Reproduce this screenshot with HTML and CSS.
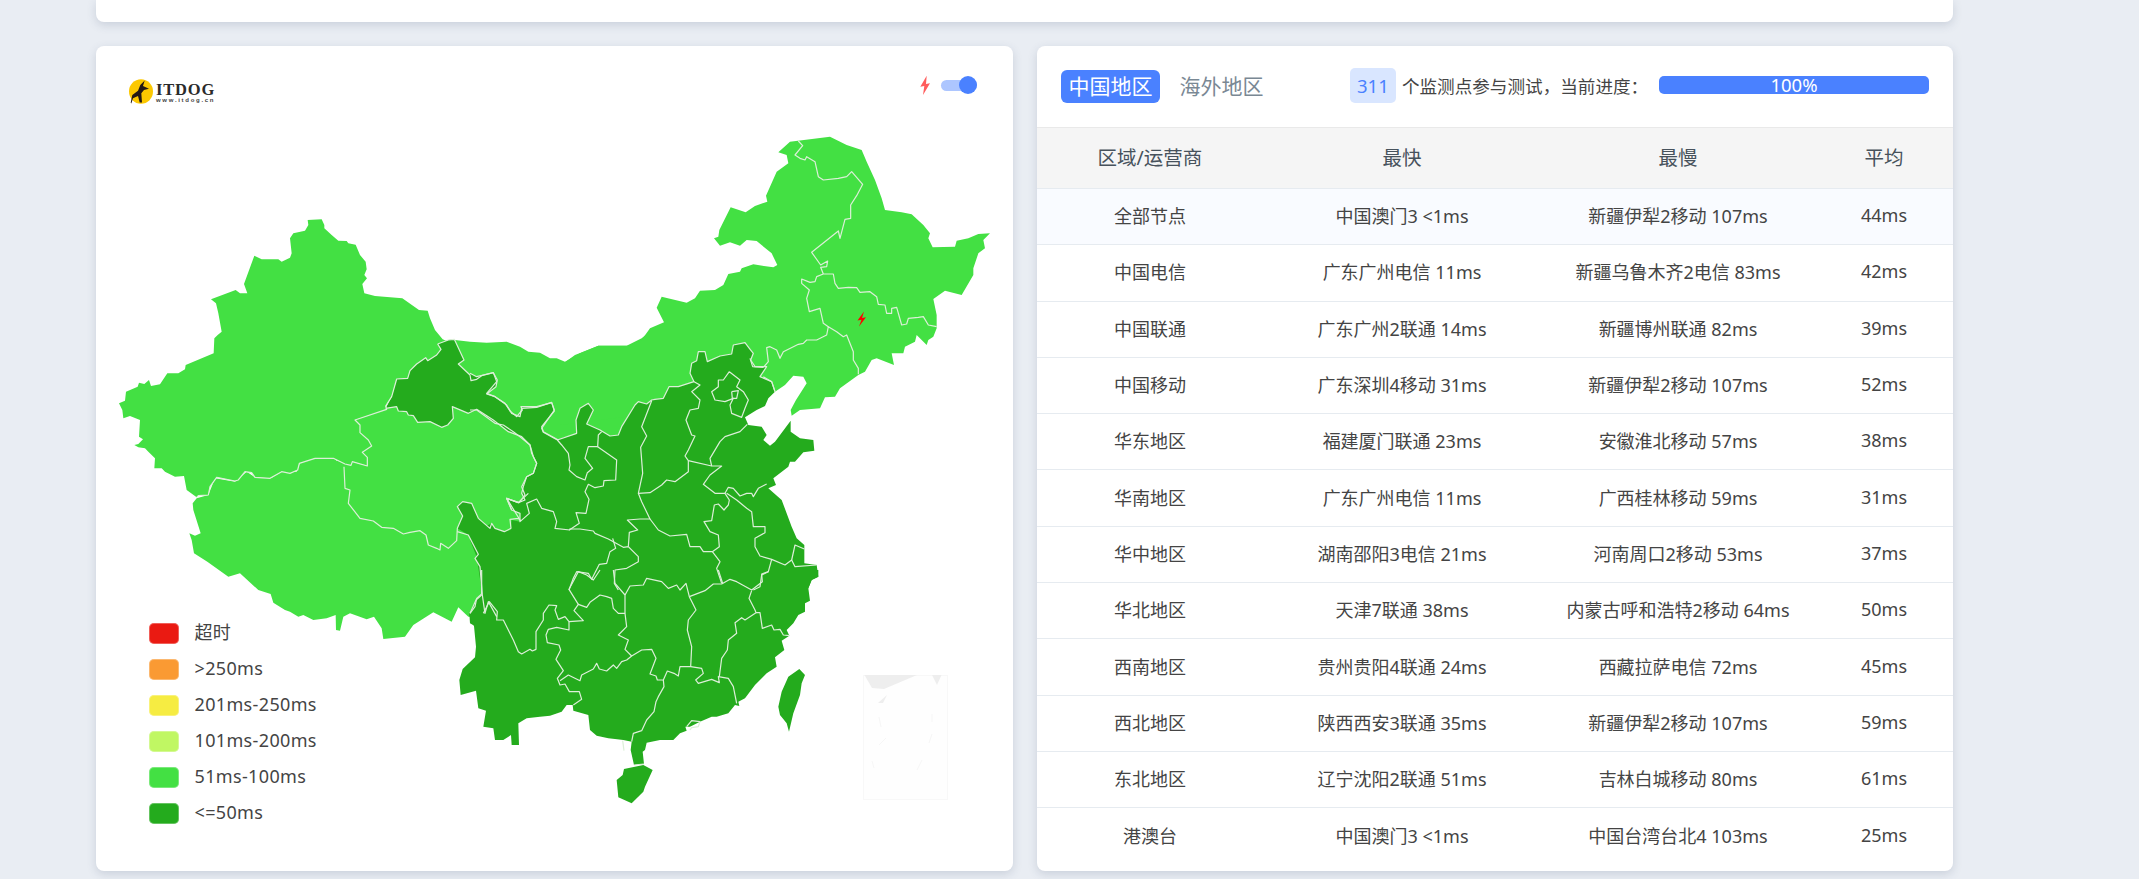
FILE: index.html
```html
<!DOCTYPE html>
<html lang="en">
<head>
    <meta charset="UTF-8">
    <meta name="viewport" content="width=device-width, initial-scale=1.0">
    <title>ITDOG - 网站测速</title>
    <link rel="stylesheet" href="styles.css">
</head>
<body>
    <div class="container">
        <div class="top-card"></div>

        <div class="panels">
            <!-- Map panel -->
            <div class="card map-card">
                <svg class="china-map" viewBox="96 46 917 825">
                    <!-- Xinjiang, Qinghai top -->
                    <g class="land-light" transform="translate(115 210) scale(.33333)">
                        <polygon points="578,30 620,28 628,45 628,55 650,75 670,92 695,93 700,100 722,104 735,135 752,155 755,178 748,195 756,205 742,222 748,250 780,258 862,265 912,300 938,302 945,325 960,360 983,388 1000,395 968,402 978,418 965,435 938,452 932,443 905,462 885,482 878,505 845,507 830,560 812,588 815,598 720,630 735,645 735,668 760,690 770,708 742,727 757,742 757,768 712,755 708,766 690,762 655,745 600,745 553,760 548,780 525,790 500,785 465,805 420,802 410,788 390,785 370,810 360,813 305,802 285,830 280,855 250,857 245,862 215,840 207,798 180,800 150,785 140,775 118,775 120,745 100,725 90,715 70,712 58,705 70,702 84,688 72,680 75,630 45,618 25,625 22,600 12,580 30,572 33,545 68,530 72,518 88,522 102,510 108,528 135,523 157,490 190,490 210,478 212,465 296,430 298,385 308,375 320,365 310,310 303,280 288,268 362,240 375,250 397,250 387,222 418,137 440,148 490,148 500,155 525,143 530,130 525,85 535,70 570,62 580,45"/>
                        <polygon points="720,630 820,590 1100,590 1300,800 1200,900 700,900 700,800 690,762 712,755 757,768 757,742 742,727 770,708 760,690 735,668 735,645"/>
                    </g>
                    <!-- Tibet, Qinghai -->
                    <g class="land-light" transform="translate(170 420) scale(.33333)">
                        <polygon points="80,235 115,225 135,175 195,185 230,155 255,172 303,175 335,155 380,155 390,128 435,115 490,113 500,122 520,125 545,135 592,137 592,110 578,95 603,78 570,40 572,10 555,0 1100,0 1100,300 940,590 895,590 865,562 845,605 790,577 730,615 705,650 640,657 635,625 612,590 590,598 540,580 520,590 510,632 498,630 497,585 470,595 430,600 400,585 385,590 360,575 345,570 310,548 302,522 265,510 210,460 175,470 112,425 72,400 65,360 58,340 75,347 92,340 70,270 68,250"/>
                    </g>
                    <!-- Inner Mongolia west -->
                    <g class="land-light" transform="translate(470 330) scale(.33333)">
                        <polygon points="-45,30 0,35 50,38 110,35 150,50 175,65 210,68 240,85 260,85 285,95 330,70 385,47 470,47 515,25 545,0 700,0 700,200 500,350 300,350 100,300 -45,150"/>
                    </g>
                    <!-- Inner Mongolia east, Heilongjiang, Jilin, Liaoning -->
                    <g class="land-light" transform="translate(560 125) scale(.33333)">
                        <polygon points="0,710 15,712 45,690 115,662 205,662 245,645 270,610 312,592 290,548 305,515 380,533 405,520 420,497 465,495 490,480 505,447 540,440 545,430 580,418 640,427 652,420 635,385 590,348 560,345 540,362 510,352 480,362 462,340 475,335 478,315 512,247 557,262 585,243 622,230 618,212 650,140 685,115 680,90 655,82 690,50 810,35 860,60 905,75 920,110 945,165 965,220 975,255 1025,262 1055,268 1090,300 1110,325 1105,340 1118,367 1185,365 1190,347 1225,340 1255,327 1290,325 1270,345 1275,370 1255,385 1240,430 1240,450 1205,510 1155,497 1120,522 1130,570 1130,610 1120,635 1105,645 1100,660 1088,648 1070,630 1065,650 1035,665 1030,685 995,685 1002,720 950,700 935,705 915,740 895,750 840,790 825,815 795,817 780,850 720,855 695,872 692,855 708,825 740,775 730,755 700,752 675,780 645,800 400,850 0,900"/>
                    </g>

                    <!-- Gansu west -->
                    <g class="land-dark" transform="translate(115 210) scale(.33333)">
                        <polygon points="968,402 1000,390 1018,388 1047,450 1030,462 1065,495 1068,512 1085,508 1100,497 1135,488 1147,510 1143,530 1115,552 1140,560 1170,580 1185,603 1205,620 1222,600 1218,590 1265,590 1310,578 1318,603 1280,650 1285,665 1330,690 1350,680 1350,900 1190,900 1175,865 1212,878 1230,855 1220,830 1235,800 1255,790 1265,760 1250,730 1245,705 1220,680 1180,665 1135,630 1085,598 1060,610 1012,590 1015,625 998,645 980,652 945,635 908,637 895,617 880,615 875,605 850,603 845,590 812,595 830,560 845,507 878,505 885,482 905,462 932,443 938,452 965,435 978,418"/>
                    </g>
                    <!-- Sichuan west edge -->
                    <g class="land-dark" transform="translate(170 420) scale(.33333)">
                        <polygon points="905,250 878,245 862,260 878,288 862,325 895,345 925,403 915,415 930,440 935,525 918,540 898,580 900,610 918,620 920,720 1100,720 1100,420 1003,336 975,325 965,310 960,325 925,295"/>
                    </g>
                    <!-- Central and east -->
                    <g class="land-dark" transform="translate(470 330) scale(.33333)">
                        <polygon points="0,130 20,140 40,135 70,128 80,155 50,190 75,200 110,225 125,250 150,260 155,235 200,232 245,217 253,240 215,295 220,307 262,330 320,310 318,270 330,235 355,220 370,240 350,282 390,300 420,318 445,315 455,290 495,225 505,215 530,222 545,210 555,208 580,205 597,170 625,170 672,155 660,130 665,100 680,92 685,65 705,65 712,95 750,78 785,72 790,45 825,38 838,55 850,70 842,90 855,110 890,110 870,140 905,155 915,185 895,205 885,228 860,240 825,262 835,285 875,290 890,315 880,330 900,347 915,335 962,272 962,305 990,325 1030,330 1033,362 1000,367 975,395 960,395 955,410 910,445 918,465 895,475 935,510 965,590 980,625 1003,645 1003,700 1040,705 1045,740 1025,750 1015,775 1010,780 35,780 20,680 0,630 0,520 30,575 45,590 65,580 75,595 100,605 122,600 125,570 150,575 150,550 125,540 110,505 145,518 165,510 155,490 160,470 170,440 190,430 200,400 190,380 180,345 150,320 130,305 100,285 75,280 20,240 0,240"/>
                    </g>
                    <!-- South, Hainan, Taiwan -->
                    <g class="land-dark" transform="translate(450 570) scale(.33333)">
                        <polygon points="90,0 1105,0 1105,20 1085,30 1075,55 1080,92 1065,100 1065,125 1045,135 1030,160 1010,180 1018,197 995,212 1003,240 975,262 980,290 950,310 915,345 885,385 865,395 868,408 855,405 835,430 800,440 785,440 750,455 720,470 706,470 710,482 690,490 670,510 630,510 590,518 585,540 578,545 582,582 552,585 542,540 545,515 520,510 495,507 475,505 440,497 420,480 415,435 370,422 368,405 350,405 335,425 300,437 270,440 230,445 205,460 207,525 185,525 183,495 160,510 135,510 130,475 100,470 108,422 85,415 78,362 32,375 28,330 38,297 75,262 78,230 72,168 57,135 60,130 75,110 80,85 95,72"/>
                        <polygon points="522,597 580,585 608,600 585,650 580,665 545,700 505,682 500,630 518,615"/>
                        <polygon points="1048,297 1065,315 1055,340 1050,375 1030,430 1017,485 1010,460 990,435 985,410 995,365 1015,320"/>
                    </g>

                    <!-- Province borders -->
                    <g class="borders" transform="translate(115 210) scale(.33333)">
                        <polyline points="968,402 1000,390 1018,388 1047,450 1030,462 1065,495 1068,512 1085,508 1100,497 1135,488 1147,510 1143,530 1115,552 1140,560 1170,580 1185,603 1205,620 1222,600 1218,590 1265,590 1310,578 1318,603 1280,650 1285,665 1330,690"/>
                        <polyline points="968,402 978,418 965,435 938,452 932,443 905,462 885,482 878,505 845,507 830,560 812,588 815,598 720,630 735,645 735,668 760,690 770,708 742,727 757,742 757,768 712,755 708,766 690,762 655,745 600,745 553,760 548,780 525,790 500,785 465,805 420,802 410,788 390,785 370,810 360,813 305,802 285,830 280,855 250,857 245,862"/>
                        <polyline points="812,595 845,590 850,603 875,605 880,615 895,617 908,637 945,635 980,652 998,645 1015,625 1012,590 1060,610 1085,598 1135,630 1180,665 1220,680 1245,705 1250,730 1265,760 1255,790 1235,800 1220,830 1230,855 1212,878 1175,865 1190,900"/>
                    </g>
                    <g class="borders" transform="translate(170 420) scale(.33333)">
                        <polyline points="522,140 525,205 540,210 535,250 570,295 610,303 635,322 670,325 700,342 720,337 750,332 768,345 775,375 800,385 810,390 812,370 835,385 860,362 862,325 878,288 862,260 878,245 905,250 925,295 960,325 965,310 975,325 1003,335 1023,325 1020,298 1045,295 1050,300 1010,235 1045,248 1075,220"/>
                        <polyline points="862,335 895,345 925,403 915,415 930,440 937,525 945,580 955,545 980,590"/>
                        <polyline points="935,525 918,540 900,580"/>
                    </g>
                    <g class="borders" transform="translate(470 330) scale(.33333)">
                        <polyline points="0,130 20,140 40,135 70,128 80,155 50,190 75,200 110,225 125,250 150,260 155,235 200,232 245,217 253,240 215,295 220,307 262,330 320,310 318,270 330,235 355,220 370,240 350,282 390,300 420,318 445,315 455,290 495,225 505,215 530,222 545,210 555,208 580,205 597,170 625,170 672,155 660,130 665,100 680,92 685,65 705,65 712,95 750,78 785,72 790,45 825,38 838,55 850,70 842,90 855,110 890,110 870,140 905,155 915,185"/>
                        <polyline points="0,240 20,240 75,280 100,285 130,305 150,320 180,345 190,380 200,400 190,430 170,440 160,470 155,490 165,510 145,518 110,505 125,540 150,550 150,575 178,550 170,520 200,507 215,535 250,545 260,575 255,595 300,600"/>
                        <polyline points="262,330 275,345 295,370 300,405 297,420 320,440 345,450 352,428 368,415 345,385 355,350 383,350 385,315 395,305"/>
                        <polyline points="383,350 440,390 437,450 402,452 400,468 375,473 355,463 345,485 357,508 348,550 318,548 328,580 298,600"/>
                        <polyline points="545,212 515,290 530,318 512,352 518,430 505,490 515,515 540,567 510,567 472,570 503,600 478,607 475,650"/>
                        <polyline points="505,490 540,488 575,465 590,450 615,455 655,425 655,392 645,378 655,360 675,318 665,315 648,270 660,240 685,235 690,210 665,185 690,165 672,155"/>
                        <polyline points="655,392 725,408 755,408 720,435 700,463 735,490 765,490 778,510 775,525 762,540 745,522 733,525 725,572 702,575 720,605 745,615 748,650 727,665"/>
                        <polyline points="725,408 720,385 750,335 765,320 810,305 832,283"/>
                        <polyline points="540,567 565,600 600,618 650,613 660,650 690,650 700,665 727,665 750,695 740,715 755,760"/>
                        <polyline points="765,490 775,472 790,475 810,498 830,490 845,490 850,500 865,475 890,462"/>
                        <polyline points="770,490 800,510 830,535 845,545 850,590 885,590 885,608 855,625 855,650 870,678 905,688 895,725 875,735 870,770 850,780"/>
                        <polyline points="905,688 945,705 965,690 975,710 1040,705"/>
                        <polyline points="965,690 975,645 1003,657"/>
                        <polyline points="298,597 330,597 370,603 375,610 415,627 430,635 460,652 475,650 505,680 505,695 470,715 435,720 433,760 445,780"/>
                        <polyline points="428,625 437,655 420,665 410,700 388,703 365,748 355,730 320,725 310,745 297,780"/>
                        <!-- Beijing, Tianjin -->
                        <polyline points="778,125 810,150 800,170 820,185 835,210 825,235 815,262 785,250 780,225 790,205 765,215 735,210 725,185 745,170 745,150 760,150 778,125"/>
                        <polyline points="785,185 805,182 800,205 787,205 785,185"/>
                    </g>
                    <g class="borders" transform="translate(560 125) scale(.33333)">
                        <polyline points="610,727 625,710 620,668 630,665 650,675 660,700 670,680 715,658 730,655 740,645 770,645 800,630 805,605 830,620 850,635 860,630 880,680 880,705 895,730 895,748"/>
                        <polyline points="610,727 578,725 570,700"/>
                        <polyline points="805,605 790,595 780,550 748,560 740,520 748,495 725,475 725,462 750,472 765,470 770,455 790,447 820,447 825,475 835,490 865,487 890,488 900,502 930,500 950,515 955,538 975,540 980,565 995,565 995,550 1010,547 1025,600 1040,597 1045,580 1075,577 1090,575 1105,600 1130,605"/>
                        <polyline points="790,447 782,427 800,425 803,408 782,420 755,382 835,318 840,340 855,283 872,280 872,240 890,212 908,178 875,140 860,155 835,160 790,165 775,155 765,110 740,95 735,105 720,100 705,90 728,62 715,48"/>
                        <polyline points="610,755 635,770 645,800"/>
                    </g>
                    <g class="borders" transform="translate(450 570) scale(.33333)">
                        <polyline points="60,130 75,110 80,85 95,72 95,0"/>
                        <polyline points="100,130 118,95 142,125 140,150 160,150 190,210 205,245 215,252 240,238 247,243 258,238 258,185 280,150 280,130 297,105 320,107 315,120 325,148 345,140 357,155 357,180 320,172 295,178 288,195 292,218 327,225 332,240 318,268 340,302 322,325 330,345 345,342 358,365 388,365 395,388 370,405"/>
                        <polyline points="330,332 355,315 390,332 395,315 430,297 440,280 448,297 470,303 490,285 500,295 515,275 530,270 545,258 575,240 605,238 618,265 600,312 618,318 622,330 640,330 652,303 672,310 685,318 690,290 722,290 755,295 760,310 737,330 745,340 785,328 808,338 805,320 835,325 850,350 860,400"/>
                        <polyline points="357,155 400,152 372,122 385,103 410,112 420,97 450,75 470,80 485,85 490,115 505,130 525,130 530,170 505,195 535,210 525,238 545,258"/>
                        <polyline points="385,103 357,58 372,30 385,5 410,15 430,30 450,0"/>
                        <polyline points="490,0 495,40 525,75 525,130"/>
                        <polyline points="525,75 540,48 580,45 590,25 635,35 655,55 680,45 690,60 708,40 718,80 738,120 715,150 712,180 725,230 722,290"/>
                        <polyline points="718,80 765,62 790,42 815,42 840,28 860,35 905,60 937,35 935,12 955,5"/>
                        <polyline points="805,0 818,40"/>
                        <polyline points="905,62 897,85 915,120 918,128 885,150 875,143 855,158 860,190 835,210 832,240 815,265 808,320"/>
                        <polyline points="918,128 930,128 937,175 965,165 972,180 990,178 1000,195 1018,197"/>
                        <polyline points="640,330 642,350 625,380 618,395 612,425 590,450 575,482 550,490 545,515"/>
                        <polyline points="518,512 522,542"/>
                        <polyline points="552,585 582,582"/>
                        <polyline points="710,470 725,452 750,455 745,470 725,473 720,480"/>
                    </g>

                    <!-- South China Sea inset -->
                    <rect class="inset" x="863.5" y="675.5" width="84" height="124"/>
                    <polygon class="inset-mark" points="864.5,675 917,675 884,689 872,688"/>
                    <polygon class="inset-mark" points="932,675 941.5,675 937,685"/>
                    <polygon class="inset-mark" points="878,703 887,695 883,703"/>
                    <polyline class="inset-line" points="879,717 881,727"/>
                    <polyline class="inset-line" points="932,714 932,722"/>
                    <polyline class="inset-line" points="879,745 886,738"/>
                    <polyline class="inset-line" points="929,743 932,734"/>
                    <polyline class="inset-line" points="872,761 874,768"/>
                    <polyline class="inset-line" points="917,770 922,760"/>

                    <!-- Event bolt on Jilin -->
                    <polygon class="bolt" points="864,311.5 857.5,320.5 861.5,319.8 859,326.5 866,317.3 862,318"/>
                </svg>

                <div class="map-head">
                    <div class="logo">
                        <svg class="logo-mark" viewBox="0 0 24 25">
                            <ellipse cx="12" cy="12.5" rx="12" ry="12.2" fill="#fcc800"/>
                            <polygon points="15.7,1.5 14,7 20,9.8 15,11 12.3,14.3 13,23.5 10.7,23.5 9,17 4,19.3 2.3,24.5 1.7,23.8 3.3,16 9,11.7 11.3,6" fill="#231815"/>
                        </svg>
                        <div class="logo-text">
                            <div class="logo-name">ITDOG</div>
                            <div class="logo-url">www.itdog.cn</div>
                        </div>
                    </div>
                    <div class="attack-switch">
                        <svg class="attack-icon" viewBox="0 0 12 20">
                            <polygon points="8.7,0.7 2.3,11.7 6.3,11 5,20 12,8.3 8,9" fill="#ff5c5c"/>
                        </svg>
                        <div class="toggle"><span class="toggle-knob"></span></div>
                    </div>
                </div>

                <ul class="legend">
                    <li><span class="swatch timeout"></span>超时</li>
                    <li><span class="swatch slow5"></span>&gt;250ms</li>
                    <li><span class="swatch slow4"></span>201ms-250ms</li>
                    <li><span class="swatch slow3"></span>101ms-200ms</li>
                    <li><span class="swatch slow2"></span>51ms-100ms</li>
                    <li><span class="swatch slow1"></span>&lt;=50ms</li>
                </ul>
            </div>

            <!-- Results panel -->
            <div class="card result-card">
                <div class="result-head">
                    <div class="tabs">
                        <span class="tab active">中国地区</span>
                        <span class="tab">海外地区</span>
                    </div>
                    <div class="progress-info">
                        <span class="node-count">311</span>
                        <span class="progress-label">个监测点参与测试，当前进度：</span>
                        <div class="progress-bar">100%</div>
                    </div>
                </div>

                <table class="result-table">
                    <thead>
                        <tr>
                            <th class="col-area">区域/运营商</th>
                            <th class="col-fast">最快</th>
                            <th class="col-slow">最慢</th>
                            <th class="col-avg">平均</th>
                        </tr>
                    </thead>
                    <tbody>
                        <tr class="row-all"><td>全部节点</td><td>中国澳门3 &lt;1ms</td><td>新疆伊犁2移动 107ms</td><td>44ms</td></tr>
                        <tr><td>中国电信</td><td>广东广州电信 11ms</td><td>新疆乌鲁木齐2电信 83ms</td><td>42ms</td></tr>
                        <tr><td>中国联通</td><td>广东广州2联通 14ms</td><td>新疆博州联通 82ms</td><td>39ms</td></tr>
                        <tr><td>中国移动</td><td>广东深圳4移动 31ms</td><td>新疆伊犁2移动 107ms</td><td>52ms</td></tr>
                        <tr><td>华东地区</td><td>福建厦门联通 23ms</td><td>安徽淮北移动 57ms</td><td>38ms</td></tr>
                        <tr><td>华南地区</td><td>广东广州电信 11ms</td><td>广西桂林移动 59ms</td><td>31ms</td></tr>
                        <tr><td>华中地区</td><td>湖南邵阳3电信 21ms</td><td>河南周口2移动 53ms</td><td>37ms</td></tr>
                        <tr><td>华北地区</td><td>天津7联通 38ms</td><td>内蒙古呼和浩特2移动 64ms</td><td>50ms</td></tr>
                        <tr><td>西南地区</td><td>贵州贵阳4联通 24ms</td><td>西藏拉萨电信 72ms</td><td>45ms</td></tr>
                        <tr><td>西北地区</td><td>陕西西安3联通 35ms</td><td>新疆伊犁2移动 107ms</td><td>59ms</td></tr>
                        <tr><td>东北地区</td><td>辽宁沈阳2联通 51ms</td><td>吉林白城移动 80ms</td><td>61ms</td></tr>
                        <tr><td>港澳台</td><td>中国澳门3 &lt;1ms</td><td>中国台湾台北4 103ms</td><td>25ms</td></tr>
                    </tbody>
                </table>
            </div>
        </div>
    </div>
</body>
</html>
```

FILE: styles.css
```css
* {
    margin: 0;
    padding: 0;
    box-sizing: border-box;
}

html, body {
    height: 879px;
    overflow: hidden;
}

body {
    font-family: "Noto Sans", "Noto Sans CJK SC", sans-serif;
    background-color: #e9edf3;
    color: #444;
    font-size: 18px;
}

.container {
    width: 1857px;
    margin-left: 96px;
}

.top-card {
    height: 22px;
    background: white;
    border-radius: 0 0 8px 8px;
    box-shadow: 0 3px 10px rgba(60,80,110,0.18);
    margin-bottom: 24px;
}

.panels {
    display: grid;
    grid-template-columns: 917px 916px;
    gap: 24px;
}

.card {
    background: white;
    border-radius: 8px;
    height: 825px;
    box-shadow: 0 3px 10px rgba(60,80,110,0.18);
}

/* map panel */
.map-card {
    position: relative;
}

.china-map {
    position: absolute;
    left: 0;
    top: 0;
    width: 917px;
    height: 825px;
}

.land-light polygon { fill: #43e043; }
.land-dark polygon { fill: #24ab1d; }

.borders polyline {
    fill: none;
    stroke: #dcefd8;
    stroke-width: 1.2px;
    stroke-linejoin: round;
    vector-effect: non-scaling-stroke;
}

.inset {
    fill: #fefefe;
    stroke: #f8f8f8;
    stroke-width: 1;
}

.inset-mark { fill: #eeeeee; }

.inset-line {
    fill: none;
    stroke: #f6f6f6;
    stroke-width: 1;
}

.bolt { fill: #ff0000; }

.map-head {
    position: relative;
    display: flex;
    justify-content: space-between;
    align-items: flex-start;
    padding: 29px 36px 0 33px;
}

.logo {
    display: flex;
    align-items: flex-start;
    gap: 3px;
    margin-top: 4px;
}

.logo-mark {
    width: 24px;
    height: 25px;
}

.logo-name {
    font-family: "Liberation Serif", serif;
    font-size: 16.5px;
    line-height: 11px;
    font-weight: bold;
    letter-spacing: 0.8px;
    color: #2a2a2a;
    margin-top: 5px;
}

.logo-url {
    font-family: "Liberation Sans", sans-serif;
    font-size: 6px;
    line-height: 6px;
    font-weight: bold;
    letter-spacing: 1.7px;
    color: #444;
    margin-top: 2px;
}

.attack-switch {
    display: flex;
    align-items: center;
    gap: 11px;
    height: 20px;
}

.attack-icon {
    width: 12px;
    height: 20px;
}

.toggle {
    position: relative;
    width: 36px;
    height: 11px;
    background: #adc6ff;
    border-radius: 6px;
}

.toggle-knob {
    position: absolute;
    right: 0;
    top: -4px;
    width: 18px;
    height: 18px;
    background: #4a81ff;
    border-radius: 50%;
}

.legend {
    position: absolute;
    left: 53px;
    top: 577px;
    list-style: none;
}

.legend li {
    display: flex;
    align-items: center;
    gap: 15.5px;
    height: 21px;
    margin-bottom: 15px;
    font-size: 18px;
    letter-spacing: 0.35px;
    line-height: 18px;
    color: #444;
}

.swatch {
    width: 30px;
    height: 21px;
    border-radius: 5px;
    box-shadow: inset 0 0 0 1px rgba(255,255,255,0.3);
    position: relative;
    top: 1px;
}

.legend li {
    padding-bottom: 3px;
}

.timeout { background: #ea1a12; }
.slow5 { background: #fa9a33; }
.slow4 { background: #f6ec42; }
.slow3 { background: #c0f763; }
.slow2 { background: #43e043; }
.slow1 { background: #24ab1d; }

/* results panel */
.result-head {
    display: flex;
    justify-content: space-between;
    align-items: center;
    height: 81px;
    padding: 0 24px;
}

.tabs {
    display: flex;
    gap: 12px;
}

.tab {
    padding: 0 7.5px;
    height: 33px;
    line-height: 33px;
    font-size: 21px;
    border-radius: 6px;
    color: #7a8894;
}

.tab.active {
    background: #4a81ff;
    color: white;
}

.progress-info {
    display: flex;
    align-items: center;
    margin-top: -3px;
}

.node-count {
    width: 46px;
    height: 35px;
    line-height: 35px;
    text-align: center;
    background: #d9e6ff;
    color: #4a81ff;
    border-radius: 5px;
    font-size: 18.5px;
    margin-right: 6px;
}

.progress-label {
    font-size: 17.6px;
    margin-right: 10.8px;
}

.progress-bar {
    width: 270px;
    height: 18px;
    line-height: 17px;
    text-align: center;
    background: #4a81ff;
    color: white;
    font-size: 18.5px;
    border-radius: 5px;
}

.result-table {
    width: 100%;
    table-layout: fixed;
    border-collapse: collapse;
    text-align: center;
}

.result-table th {
    height: 61px;
    padding-bottom: 3px;
    background: #f5f5f5;
    font-size: 19.5px;
    font-weight: normal;
    color: #47525c;
    border-top: 1px solid #e9e9e9;
    border-bottom: 1px solid #e6ebf0;
}

.result-table td {
    height: 56.3px;
    padding-bottom: 3px;
    border-bottom: 1px solid #e6ebf0;
}

.result-table tr:last-child td {
    border-bottom: none;
}

.row-all { background: #f9fbff; }

.col-area { width: 226px; }
.col-fast { width: 278px; }
.col-slow { width: 274px; }
.col-avg { width: 138px; }
```
